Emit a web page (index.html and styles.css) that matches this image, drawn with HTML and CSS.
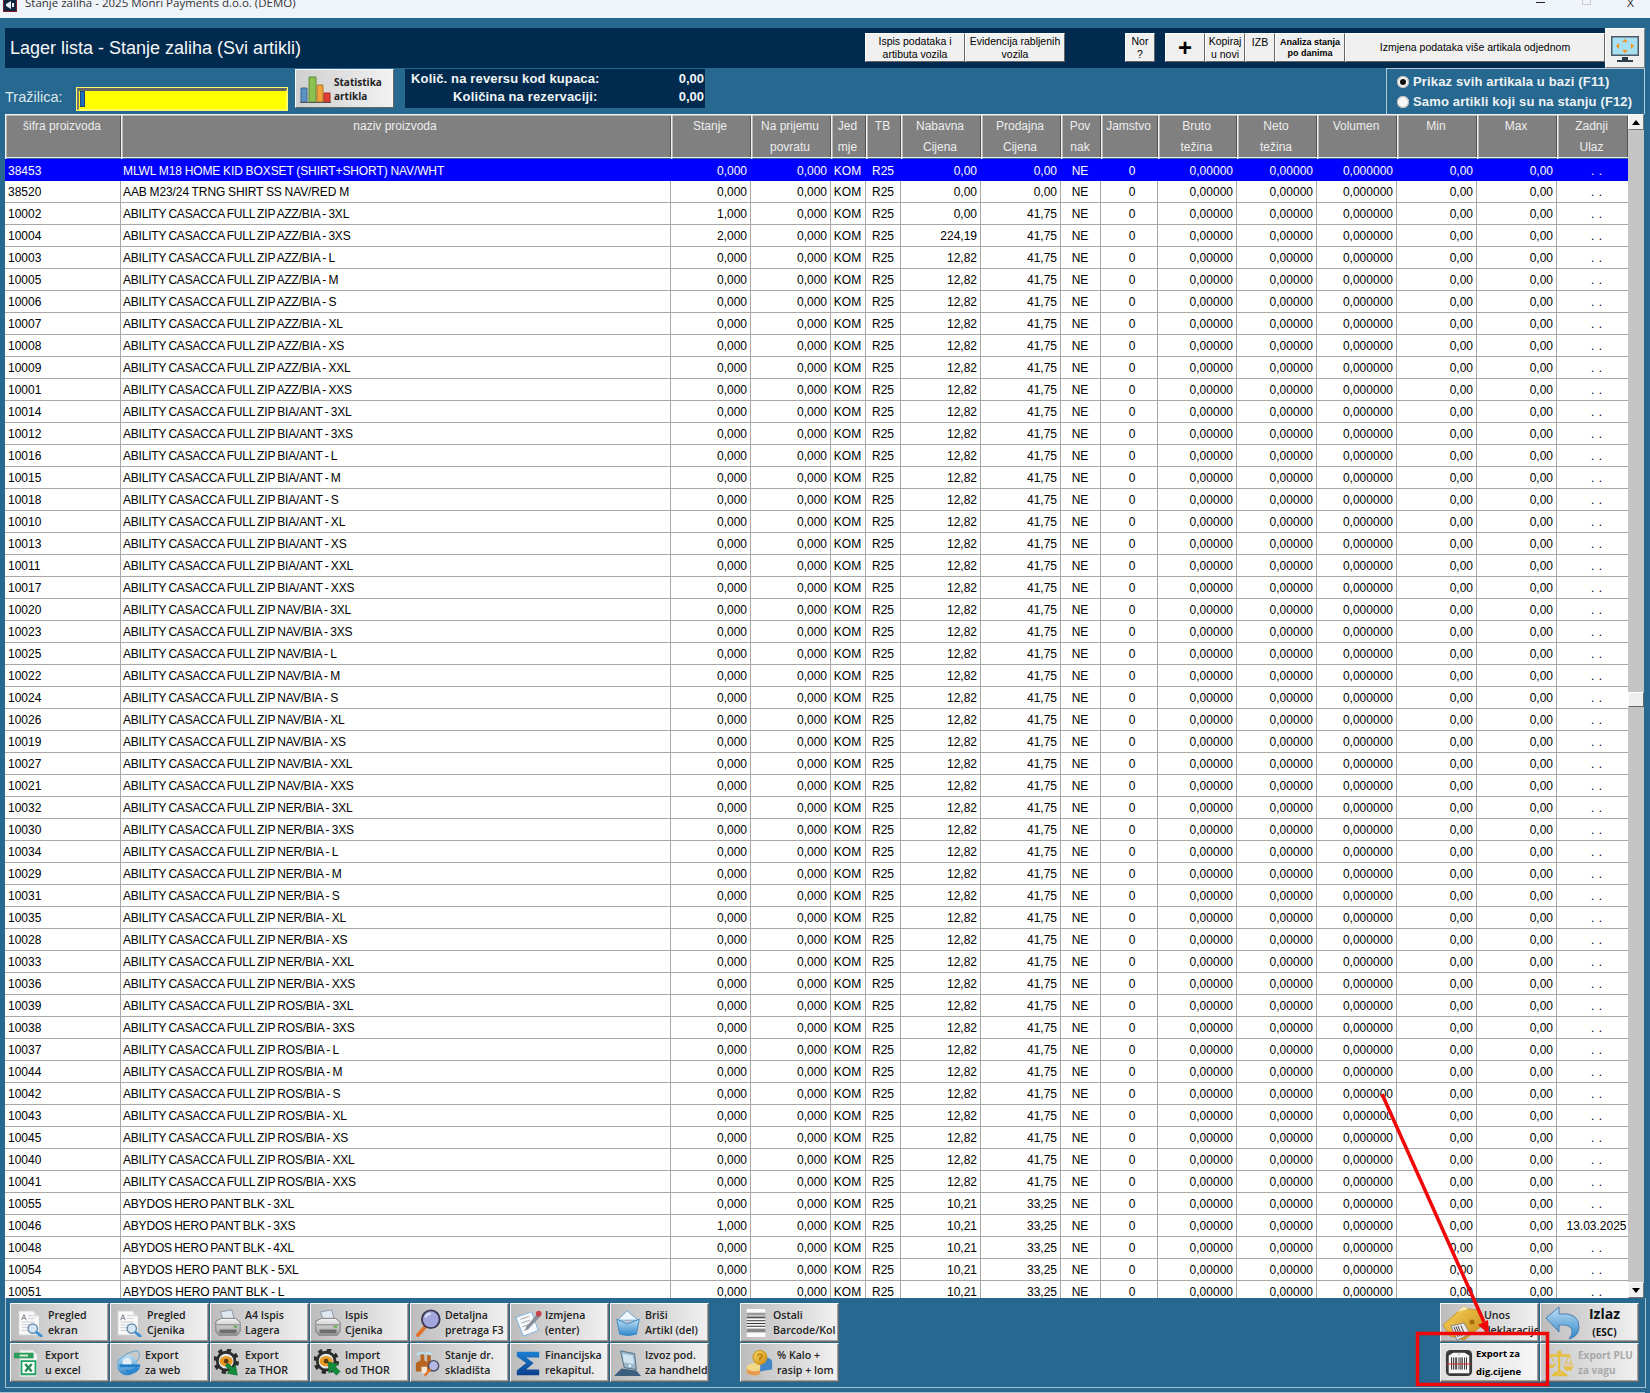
FILE: index.html
```html
<!DOCTYPE html>
<html lang="hr">
<head>
<meta charset="utf-8">
<title>Stanje zaliha</title>
<link rel="stylesheet" href="styles.css">
</head>
<body>
<svg class="defs" width="0" height="0" aria-hidden="true">
<defs>
<linearGradient id="gGrey" x1="0" y1="0" x2="0" y2="1"><stop offset="0" stop-color="#f4f4f4"/><stop offset="1" stop-color="#9a9a9a"/></linearGradient>
<linearGradient id="gBlue" x1="0" y1="0" x2="0" y2="1"><stop offset="0" stop-color="#bfe0f5"/><stop offset="1" stop-color="#2f86c8"/></linearGradient>
<linearGradient id="gGold" x1="0" y1="0" x2="1" y2="1"><stop offset="0" stop-color="#f7d560"/><stop offset="1" stop-color="#c88a14"/></linearGradient>
<linearGradient id="gSig" x1="0" y1="0" x2="0" y2="1"><stop offset="0" stop-color="#1c7fd0"/><stop offset="1" stop-color="#0b3f8c"/></linearGradient>
<symbol id="i-doc" viewBox="0 0 30 30">
<path d="M3 2h16l6 6v20H3z" fill="#fafafa" stroke="#c5c5c5"/><path d="M19 2v6h6z" fill="#dcdcdc"/>
<path d="M6 12l2.500-6 2.500 6M7 10h3" fill="none" stroke="#7a7a8a" stroke-width="1"/>
<path d="M13 7h5M13 10h7M6 14h14M6 17h10M6 20h8M6 23h8" stroke="#c4cad2" stroke-width="1"/>
<circle cx="18" cy="21" r="5" fill="#d4e7f6" stroke="#6f8ea8" stroke-width="1.600"/><path d="M22 25l5 4" stroke="#3f8fd0" stroke-width="3" stroke-linecap="round"/>
</symbol>
<symbol id="i-printer" viewBox="0 0 30 30">
<path d="M7 3l12-2 3 11H10z" fill="#dfe7ef" stroke="#8a97a5"/>
<path d="M2 13l6-3h15l5 4v10l-3 4H5l-3-4z" fill="url(#gGrey)" stroke="#777"/>
<path d="M3 17h24" stroke="#777"/><path d="M6 22h18v4H6z" fill="#6d6d6d"/><path d="M21 19h4" stroke="#5fb04a" stroke-width="2"/>
</symbol>
<symbol id="i-mag" viewBox="0 0 30 30">
<path d="M13 18L4 28" stroke="#e0722a" stroke-width="4" stroke-linecap="round"/>
<circle cx="18" cy="11" r="9.500" fill="#a3a7de" stroke="#3a3a52" stroke-width="2"/><path d="M12 9a7 7 0 0 1 6-4" stroke="#e6e8fa" stroke-width="2" fill="none"/>
</symbol>
<symbol id="i-edit" viewBox="0 0 30 30">
<path d="M2 9l17-6 7 20-16 6z" fill="#f6f9fc" stroke="#7cb1dc"/>
<path d="M7 11l9-3M8 15l9-3M9 19l9-3M11 23l5-2" stroke="#9a9a9a"/>
<path d="M13 19L25 5l3 3-12 13-4 2z" fill="#8a8e9a"/><circle cx="26.500" cy="5" r="3" fill="#c8404a"/>
</symbol>
<symbol id="i-trash" viewBox="0 0 30 30">
<path d="M4 12L14 2l12 10z" fill="#eef7fc" stroke="#6aa8d8"/>
<path d="M3 11l11 5 13-5-3 16q-9 3-18 0z" fill="url(#gBlue)" stroke="#3a86c4"/>
</symbol>
<symbol id="i-excel" viewBox="0 0 30 30">
<path d="M6 1h14l5 5v24H6z" fill="#f2f2f2" stroke="#cfcfcf"/>
<path d="M0 4h21v6H0z" fill="#2f9d5a"/><path d="M6 6h9v2H6z" fill="#d6f0de"/>
<path d="M8 13h15v14H8z" fill="#fff" stroke="#21a366" stroke-width="2"/><path d="M12 16l7 8M19 16l-7 8" stroke="#1a8a52" stroke-width="2.400"/>
</symbol>
<symbol id="i-ie" viewBox="0 0 30 30">
<circle cx="14" cy="17" r="11" fill="url(#gBlue)"/><circle cx="14" cy="14.500" r="5" fill="#e6eef5"/>
<path d="M6 16.500h22v3H6z" fill="#1f7cc8"/><path d="M12 22q8 1 11-3l5 1q-5 8-14 7z" fill="#2a88d0"/>
<path d="M3 14Q14 2 25 2q5 3-1 12" fill="none" stroke="#7aa9c8" stroke-width="1.200"/>
</symbol>
<symbol id="i-gearout" viewBox="0 0 30 30">
<circle cx="13" cy="13" r="9.500" fill="#e8e8e8" stroke="#2e2e2e" stroke-width="3"/><circle cx="13" cy="13" r="12" fill="none" stroke="#2a2a2a" stroke-width="3.500" stroke-dasharray="4.500 5"/>
<ellipse cx="13" cy="13" rx="7" ry="5.500" fill="#e89a24"/><circle cx="13" cy="13" r="2.500" fill="#5a3a10"/>
<path d="M15 15l5 5 3-3 2 11-11-2 3-3-5-5z" fill="#148a3c" stroke="#0c6a2c" stroke-width=".6"/>
</symbol>
<symbol id="i-gearin" viewBox="0 0 30 30">
<circle cx="13" cy="13" r="9.500" fill="#e8e8e8" stroke="#2e2e2e" stroke-width="3"/><circle cx="13" cy="13" r="12" fill="none" stroke="#2a2a2a" stroke-width="3.500" stroke-dasharray="4.500 5"/>
<ellipse cx="13" cy="13" rx="7" ry="5.500" fill="#e89a24"/><circle cx="13" cy="13" r="2.500" fill="#5a3a10"/>
<path d="M15 14l11 2-3 3 5 5-4 4-5-5-3 3z" fill="#148a3c" stroke="#0c6a2c" stroke-width=".6"/>
</symbol>
<symbol id="i-store" viewBox="0 0 30 30">
<path d="M2 15l5-3v-7h4v7l3 2v-8h4v10h1v8H2z" fill="#b8651f"/><path d="M8 19h6v7H8z" fill="#f2e7d5"/>
<path d="M2 6q4-5 9-2 5-2 9 1l-3 2q-3-2-6-1-4-1-7 1z" fill="#b9dff2"/>
<circle cx="21" cy="18" r="5.500" fill="#b4b8e2" stroke="#4a4a60" stroke-width="1.500"/><path d="M17 22l-5 6" stroke="#e0722a" stroke-width="2.500" stroke-linecap="round"/>
</symbol>
<symbol id="i-sigma" viewBox="0 0 30 30">
<path d="M3 3h24v6H13l8 6-8 7h14v6H3v-5l10-8L3 8z" fill="url(#gSig)"/>
</symbol>
<symbol id="i-pda" viewBox="0 0 30 30">
<path d="M7 2l15 3 2 17-13-2z" fill="#9ab7cc" stroke="#506a80"/><path d="M9 5l11 2 1.500 9-11-1.500z" fill="#cfe3ef"/>
<circle cx="17" cy="18" r="1.500" fill="#e8f4fa"/>
<path d="M8 21l16 2 5 6H0z" fill="#3b5f7d"/>
</symbol>
<symbol id="i-stripes" viewBox="0 0 30 30">
<path d="M4 0h20v30H4z" fill="#fafafa"/><path d="M4 4h20v3H4z" fill="#999"/><path d="M4 8h20v2H4z" fill="#555"/><path d="M4 12h20v1H4zM4 15h20v1H4zM4 18h20v1H4z" fill="#333"/><path d="M4 21h20v4H4z" fill="#888"/>
</symbol>
<symbol id="i-coin" viewBox="0 0 30 30">
<path d="M2 19a11 5 0 0 1 14-4v12q-8 3-14-1z" fill="#f2d98a"/><path d="M2 21a9 4 0 0 0 14 2v4q-8 3-14-1z" fill="#e89a50"/>
<path d="M17 10q9-3 12 3v9l-13 2z" fill="#3f86c8"/>
<circle cx="16" cy="9" r="7.500" fill="url(#gGold)" stroke="#c89010"/><path d="M13.500 7q2.500-3 5 0-.5 2-2.500 3v2" fill="none" stroke="#b87a00" stroke-width="1.500"/>
</symbol>
<symbol id="i-folder" viewBox="0 0 40 36">
<path d="M0 20L21 1l4 3 12 1 3 15-19 15-14-4z" fill="url(#gGold)" stroke="#b07a10" stroke-width=".6"/><path d="M25 4L14 7l7-6z" fill="#f6eab8"/>
<circle cx="29" cy="17" r="2.500" fill="#a86a10"/>
<path d="M8 21l13-3 6 11-13 6z" fill="#ececec" stroke="#888"/><path d="M11 22l4 10M13 21.500l4 10M15 21l4 10M18 20.500l4 10" stroke="#444"/>
</symbol>
<symbol id="i-undo" viewBox="0 0 36 36">
<path d="M1 13L14 2v7q20-2 20 13 0 9-10 12 4-5 3-9-2-6-13-5v7z" fill="url(#gBlue)" stroke="#4a7fb5"/>
</symbol>
<symbol id="i-scan" viewBox="0 0 30 30">
<rect x="1" y="1" width="28" height="28" rx="5" fill="#3a3a3a"/><path d="M4 7l5-3h12l5 3v19H4z" fill="#f6f6f6"/>
<path d="M6 9h18v12H6z" fill="#fff"/><path d="M7 9v13M9 9v13M11 9v13M12.500 9v13M15 9v13M17 9v13M18.500 9v13M21 9v13M23 9v13" stroke="#222" stroke-width="1"/>
<path d="M2 16h26" stroke="#e0252a" stroke-width="1"/><path d="M14.500 5h1v1h-1z" fill="#333"/>
</symbol>
<symbol id="i-scale" viewBox="0 0 30 30">
<path d="M14 3v22M8 28h13l-3-3h-7zM3 7h23" stroke="#e6bf3c" stroke-width="2.500" fill="none"/><circle cx="14.500" cy="4" r="2.500" fill="#e6bf3c"/>
<path d="M1 17h9l-2 3H3zM19 19h10l-2 4h-6z" fill="#e6bf3c"/><path d="M3 7l-2 10M5 7l5 10M24 8l-5 11M25 8l4 11" stroke="#e6bf3c"/><path d="M21 14h6v5h-6z" fill="#e0c8a0"/>
</symbol>
</defs>
</svg>

<header class="titlebar">
  <svg class="winicon" viewBox="0 0 14 14" width="14" height="14"><path d="M0 0h14v14H0z" fill="#7a1f2a"/><path d="M1 1h12v12H1z" fill="#10263f"/><path d="M3 6l5-3v8l-5-3zM9 5h2v4H9z" fill="#e8eef4"/></svg>
  <span class="wintitle">Stanje zaliha - 2025 Monri Payments d.o.o. (DEMO)</span>
  <span class="winctl">
    <span class="winmin"></span><span class="winmax"></span><span class="winclose">X</span>
  </span>
</header>

<div class="screen">
  <div class="topbar">
    <div class="heading">
      <h1 class="pagetitle">Lager lista - Stanje zaliha (Svi artikli)</h1>
      <button class="tool w100">Ispis podataka i<br>artibuta vozila</button>
      <button class="tool w100">Evidencija rabljenih<br>vozila</button>
      <button class="tool w30 gapl60">Nor<br>?</button>
      <button class="tool w40 gapl10 plus">+</button>
      <button class="tool w40">Kopiraj<br>u novi</button>
      <button class="tool w30 top">IZB</button>
      <button class="tool w70 strong">Analiza stanja<br>po danima</button>
      <button class="tool w260">Izmjena podataka više artikala odjednom</button>
    </div>
    <button class="monitor" aria-label="Monitor">
      <svg viewBox="0 0 28 27" width="28" height="27"><path d="M0 0h28v20H0z" fill="#4a5a68"/><path d="M1.500 1.500h25v17h-25z" fill="#a8dff2"/><path d="M11 21h6v3h-6zM6 24h16v2H6z" fill="#2e3e4c"/><path d="M14 3l3 3h-6zM14 17l-3-3h6zM5 10l3-3v6zM23 10l-3-3v6z" fill="#f2951f"/></svg>
    </button>
  </div>

  <div class="searchrow">
    <label class="searchlabel">Tražilica:</label>
    <div class="searchinput"><span class="caret"></span></div>
    <button class="statbtn">
      <svg viewBox="0 0 31 27" width="31" height="27"><path d="M1 12h6v14H1z" fill="#5b93c7" stroke="#3a668f"/><path d="M9 1h7v25H9z" fill="#8cc152" stroke="#5e8a30"/><path d="M17 9h6v17h-6z" fill="#f0a23c" stroke="#b5741e"/><path d="M24 17h6v9h-6z" fill="#e23e36" stroke="#a82820"/><path d="M0 26h31v1H0z" fill="#555"/></svg>
      <span>Statistika<br>artikla</span>
    </button>
    <div class="info">
      <div class="infolabels"><div>Količ. na reversu kod kupaca:</div><div class="indent">Količina na rezervaciji:</div></div>
      <div class="infovals"><div>0,00</div><div>0,00</div></div>
    </div>
    <div class="radios">
      <div class="radio"><span class="dot on"></span>Prikaz svih artikala u bazi (F11)</div>
      <div class="radio"><span class="dot"></span>Samo artikli koji su na stanju (F12)</div>
    </div>
  </div>

  <div class="gridwrap">
    <table class="grid">
      <colgroup><col class="c116"><col class="c550"><col class="c80"><col class="c80"><col class="c35"><col class="c35"><col class="c80"><col class="c80"><col class="c40"><col class="c57"><col class="c79"><col class="c80"><col class="c80"><col class="c80"><col class="c80"><col class="c71"></colgroup>
      <thead><tr><th>šifra proizvoda<th>naziv proizvoda<th>Stanje<th>Na prijemu<br>povratu<th>Jed<br>mje<th>TB<th>Nabavna<br>Cijena<th>Prodajna<br>Cijena<th>Pov<br>nak<th>Jamstvo<th>Bruto<br>težina<th>Neto<br>težina<th>Volumen<th>Min<th>Max<th>Zadnji<br>Ulaz</tr></thead>
      <tbody>
<tr class="sel"><td>38453<td>MLWL M18 HOME KID BOXSET (SHIRT+SHORT) NAV/WHT<td>0,000<td>0,000<td>KOM<td>R25<td>0,00<td>0,00<td>NE<td>0<td>0,00000<td>0,00000<td>0,000000<td>0,00<td>0,00<td>. .
<tr><td>38520<td>AAB M23/24 TRNG SHIRT SS NAV/RED M<td>0,000<td>0,000<td>KOM<td>R25<td>0,00<td>0,00<td>NE<td>0<td>0,00000<td>0,00000<td>0,000000<td>0,00<td>0,00<td>. .
<tr><td>10002<td>ABILITY CASACCA FULL ZIP AZZ/BIA - 3XL<td>1,000<td>0,000<td>KOM<td>R25<td>0,00<td>41,75<td>NE<td>0<td>0,00000<td>0,00000<td>0,000000<td>0,00<td>0,00<td>. .
<tr><td>10004<td>ABILITY CASACCA FULL ZIP AZZ/BIA - 3XS<td>2,000<td>0,000<td>KOM<td>R25<td>224,19<td>41,75<td>NE<td>0<td>0,00000<td>0,00000<td>0,000000<td>0,00<td>0,00<td>. .
<tr><td>10003<td>ABILITY CASACCA FULL ZIP AZZ/BIA - L<td>0,000<td>0,000<td>KOM<td>R25<td>12,82<td>41,75<td>NE<td>0<td>0,00000<td>0,00000<td>0,000000<td>0,00<td>0,00<td>. .
<tr><td>10005<td>ABILITY CASACCA FULL ZIP AZZ/BIA - M<td>0,000<td>0,000<td>KOM<td>R25<td>12,82<td>41,75<td>NE<td>0<td>0,00000<td>0,00000<td>0,000000<td>0,00<td>0,00<td>. .
<tr><td>10006<td>ABILITY CASACCA FULL ZIP AZZ/BIA - S<td>0,000<td>0,000<td>KOM<td>R25<td>12,82<td>41,75<td>NE<td>0<td>0,00000<td>0,00000<td>0,000000<td>0,00<td>0,00<td>. .
<tr><td>10007<td>ABILITY CASACCA FULL ZIP AZZ/BIA - XL<td>0,000<td>0,000<td>KOM<td>R25<td>12,82<td>41,75<td>NE<td>0<td>0,00000<td>0,00000<td>0,000000<td>0,00<td>0,00<td>. .
<tr><td>10008<td>ABILITY CASACCA FULL ZIP AZZ/BIA - XS<td>0,000<td>0,000<td>KOM<td>R25<td>12,82<td>41,75<td>NE<td>0<td>0,00000<td>0,00000<td>0,000000<td>0,00<td>0,00<td>. .
<tr><td>10009<td>ABILITY CASACCA FULL ZIP AZZ/BIA - XXL<td>0,000<td>0,000<td>KOM<td>R25<td>12,82<td>41,75<td>NE<td>0<td>0,00000<td>0,00000<td>0,000000<td>0,00<td>0,00<td>. .
<tr><td>10001<td>ABILITY CASACCA FULL ZIP AZZ/BIA - XXS<td>0,000<td>0,000<td>KOM<td>R25<td>12,82<td>41,75<td>NE<td>0<td>0,00000<td>0,00000<td>0,000000<td>0,00<td>0,00<td>. .
<tr><td>10014<td>ABILITY CASACCA FULL ZIP BIA/ANT - 3XL<td>0,000<td>0,000<td>KOM<td>R25<td>12,82<td>41,75<td>NE<td>0<td>0,00000<td>0,00000<td>0,000000<td>0,00<td>0,00<td>. .
<tr><td>10012<td>ABILITY CASACCA FULL ZIP BIA/ANT - 3XS<td>0,000<td>0,000<td>KOM<td>R25<td>12,82<td>41,75<td>NE<td>0<td>0,00000<td>0,00000<td>0,000000<td>0,00<td>0,00<td>. .
<tr><td>10016<td>ABILITY CASACCA FULL ZIP BIA/ANT - L<td>0,000<td>0,000<td>KOM<td>R25<td>12,82<td>41,75<td>NE<td>0<td>0,00000<td>0,00000<td>0,000000<td>0,00<td>0,00<td>. .
<tr><td>10015<td>ABILITY CASACCA FULL ZIP BIA/ANT - M<td>0,000<td>0,000<td>KOM<td>R25<td>12,82<td>41,75<td>NE<td>0<td>0,00000<td>0,00000<td>0,000000<td>0,00<td>0,00<td>. .
<tr><td>10018<td>ABILITY CASACCA FULL ZIP BIA/ANT - S<td>0,000<td>0,000<td>KOM<td>R25<td>12,82<td>41,75<td>NE<td>0<td>0,00000<td>0,00000<td>0,000000<td>0,00<td>0,00<td>. .
<tr><td>10010<td>ABILITY CASACCA FULL ZIP BIA/ANT - XL<td>0,000<td>0,000<td>KOM<td>R25<td>12,82<td>41,75<td>NE<td>0<td>0,00000<td>0,00000<td>0,000000<td>0,00<td>0,00<td>. .
<tr><td>10013<td>ABILITY CASACCA FULL ZIP BIA/ANT - XS<td>0,000<td>0,000<td>KOM<td>R25<td>12,82<td>41,75<td>NE<td>0<td>0,00000<td>0,00000<td>0,000000<td>0,00<td>0,00<td>. .
<tr><td>10011<td>ABILITY CASACCA FULL ZIP BIA/ANT - XXL<td>0,000<td>0,000<td>KOM<td>R25<td>12,82<td>41,75<td>NE<td>0<td>0,00000<td>0,00000<td>0,000000<td>0,00<td>0,00<td>. .
<tr><td>10017<td>ABILITY CASACCA FULL ZIP BIA/ANT - XXS<td>0,000<td>0,000<td>KOM<td>R25<td>12,82<td>41,75<td>NE<td>0<td>0,00000<td>0,00000<td>0,000000<td>0,00<td>0,00<td>. .
<tr><td>10020<td>ABILITY CASACCA FULL ZIP NAV/BIA - 3XL<td>0,000<td>0,000<td>KOM<td>R25<td>12,82<td>41,75<td>NE<td>0<td>0,00000<td>0,00000<td>0,000000<td>0,00<td>0,00<td>. .
<tr><td>10023<td>ABILITY CASACCA FULL ZIP NAV/BIA - 3XS<td>0,000<td>0,000<td>KOM<td>R25<td>12,82<td>41,75<td>NE<td>0<td>0,00000<td>0,00000<td>0,000000<td>0,00<td>0,00<td>. .
<tr><td>10025<td>ABILITY CASACCA FULL ZIP NAV/BIA - L<td>0,000<td>0,000<td>KOM<td>R25<td>12,82<td>41,75<td>NE<td>0<td>0,00000<td>0,00000<td>0,000000<td>0,00<td>0,00<td>. .
<tr><td>10022<td>ABILITY CASACCA FULL ZIP NAV/BIA - M<td>0,000<td>0,000<td>KOM<td>R25<td>12,82<td>41,75<td>NE<td>0<td>0,00000<td>0,00000<td>0,000000<td>0,00<td>0,00<td>. .
<tr><td>10024<td>ABILITY CASACCA FULL ZIP NAV/BIA - S<td>0,000<td>0,000<td>KOM<td>R25<td>12,82<td>41,75<td>NE<td>0<td>0,00000<td>0,00000<td>0,000000<td>0,00<td>0,00<td>. .
<tr><td>10026<td>ABILITY CASACCA FULL ZIP NAV/BIA - XL<td>0,000<td>0,000<td>KOM<td>R25<td>12,82<td>41,75<td>NE<td>0<td>0,00000<td>0,00000<td>0,000000<td>0,00<td>0,00<td>. .
<tr><td>10019<td>ABILITY CASACCA FULL ZIP NAV/BIA - XS<td>0,000<td>0,000<td>KOM<td>R25<td>12,82<td>41,75<td>NE<td>0<td>0,00000<td>0,00000<td>0,000000<td>0,00<td>0,00<td>. .
<tr><td>10027<td>ABILITY CASACCA FULL ZIP NAV/BIA - XXL<td>0,000<td>0,000<td>KOM<td>R25<td>12,82<td>41,75<td>NE<td>0<td>0,00000<td>0,00000<td>0,000000<td>0,00<td>0,00<td>. .
<tr><td>10021<td>ABILITY CASACCA FULL ZIP NAV/BIA - XXS<td>0,000<td>0,000<td>KOM<td>R25<td>12,82<td>41,75<td>NE<td>0<td>0,00000<td>0,00000<td>0,000000<td>0,00<td>0,00<td>. .
<tr><td>10032<td>ABILITY CASACCA FULL ZIP NER/BIA - 3XL<td>0,000<td>0,000<td>KOM<td>R25<td>12,82<td>41,75<td>NE<td>0<td>0,00000<td>0,00000<td>0,000000<td>0,00<td>0,00<td>. .
<tr><td>10030<td>ABILITY CASACCA FULL ZIP NER/BIA - 3XS<td>0,000<td>0,000<td>KOM<td>R25<td>12,82<td>41,75<td>NE<td>0<td>0,00000<td>0,00000<td>0,000000<td>0,00<td>0,00<td>. .
<tr><td>10034<td>ABILITY CASACCA FULL ZIP NER/BIA - L<td>0,000<td>0,000<td>KOM<td>R25<td>12,82<td>41,75<td>NE<td>0<td>0,00000<td>0,00000<td>0,000000<td>0,00<td>0,00<td>. .
<tr><td>10029<td>ABILITY CASACCA FULL ZIP NER/BIA - M<td>0,000<td>0,000<td>KOM<td>R25<td>12,82<td>41,75<td>NE<td>0<td>0,00000<td>0,00000<td>0,000000<td>0,00<td>0,00<td>. .
<tr><td>10031<td>ABILITY CASACCA FULL ZIP NER/BIA - S<td>0,000<td>0,000<td>KOM<td>R25<td>12,82<td>41,75<td>NE<td>0<td>0,00000<td>0,00000<td>0,000000<td>0,00<td>0,00<td>. .
<tr><td>10035<td>ABILITY CASACCA FULL ZIP NER/BIA - XL<td>0,000<td>0,000<td>KOM<td>R25<td>12,82<td>41,75<td>NE<td>0<td>0,00000<td>0,00000<td>0,000000<td>0,00<td>0,00<td>. .
<tr><td>10028<td>ABILITY CASACCA FULL ZIP NER/BIA - XS<td>0,000<td>0,000<td>KOM<td>R25<td>12,82<td>41,75<td>NE<td>0<td>0,00000<td>0,00000<td>0,000000<td>0,00<td>0,00<td>. .
<tr><td>10033<td>ABILITY CASACCA FULL ZIP NER/BIA - XXL<td>0,000<td>0,000<td>KOM<td>R25<td>12,82<td>41,75<td>NE<td>0<td>0,00000<td>0,00000<td>0,000000<td>0,00<td>0,00<td>. .
<tr><td>10036<td>ABILITY CASACCA FULL ZIP NER/BIA - XXS<td>0,000<td>0,000<td>KOM<td>R25<td>12,82<td>41,75<td>NE<td>0<td>0,00000<td>0,00000<td>0,000000<td>0,00<td>0,00<td>. .
<tr><td>10039<td>ABILITY CASACCA FULL ZIP ROS/BIA - 3XL<td>0,000<td>0,000<td>KOM<td>R25<td>12,82<td>41,75<td>NE<td>0<td>0,00000<td>0,00000<td>0,000000<td>0,00<td>0,00<td>. .
<tr><td>10038<td>ABILITY CASACCA FULL ZIP ROS/BIA - 3XS<td>0,000<td>0,000<td>KOM<td>R25<td>12,82<td>41,75<td>NE<td>0<td>0,00000<td>0,00000<td>0,000000<td>0,00<td>0,00<td>. .
<tr><td>10037<td>ABILITY CASACCA FULL ZIP ROS/BIA - L<td>0,000<td>0,000<td>KOM<td>R25<td>12,82<td>41,75<td>NE<td>0<td>0,00000<td>0,00000<td>0,000000<td>0,00<td>0,00<td>. .
<tr><td>10044<td>ABILITY CASACCA FULL ZIP ROS/BIA - M<td>0,000<td>0,000<td>KOM<td>R25<td>12,82<td>41,75<td>NE<td>0<td>0,00000<td>0,00000<td>0,000000<td>0,00<td>0,00<td>. .
<tr><td>10042<td>ABILITY CASACCA FULL ZIP ROS/BIA - S<td>0,000<td>0,000<td>KOM<td>R25<td>12,82<td>41,75<td>NE<td>0<td>0,00000<td>0,00000<td>0,000000<td>0,00<td>0,00<td>. .
<tr><td>10043<td>ABILITY CASACCA FULL ZIP ROS/BIA - XL<td>0,000<td>0,000<td>KOM<td>R25<td>12,82<td>41,75<td>NE<td>0<td>0,00000<td>0,00000<td>0,000000<td>0,00<td>0,00<td>. .
<tr><td>10045<td>ABILITY CASACCA FULL ZIP ROS/BIA - XS<td>0,000<td>0,000<td>KOM<td>R25<td>12,82<td>41,75<td>NE<td>0<td>0,00000<td>0,00000<td>0,000000<td>0,00<td>0,00<td>. .
<tr><td>10040<td>ABILITY CASACCA FULL ZIP ROS/BIA - XXL<td>0,000<td>0,000<td>KOM<td>R25<td>12,82<td>41,75<td>NE<td>0<td>0,00000<td>0,00000<td>0,000000<td>0,00<td>0,00<td>. .
<tr><td>10041<td>ABILITY CASACCA FULL ZIP ROS/BIA - XXS<td>0,000<td>0,000<td>KOM<td>R25<td>12,82<td>41,75<td>NE<td>0<td>0,00000<td>0,00000<td>0,000000<td>0,00<td>0,00<td>. .
<tr><td>10055<td>ABYDOS HERO PANT BLK - 3XL<td>0,000<td>0,000<td>KOM<td>R25<td>10,21<td>33,25<td>NE<td>0<td>0,00000<td>0,00000<td>0,000000<td>0,00<td>0,00<td>. .
<tr><td>10046<td>ABYDOS HERO PANT BLK - 3XS<td>1,000<td>0,000<td>KOM<td>R25<td>10,21<td>33,25<td>NE<td>0<td>0,00000<td>0,00000<td>0,000000<td>0,00<td>0,00<td>13.03.2025
<tr><td>10048<td>ABYDOS HERO PANT BLK - 4XL<td>0,000<td>0,000<td>KOM<td>R25<td>10,21<td>33,25<td>NE<td>0<td>0,00000<td>0,00000<td>0,000000<td>0,00<td>0,00<td>. .
<tr><td>10054<td>ABYDOS HERO PANT BLK - 5XL<td>0,000<td>0,000<td>KOM<td>R25<td>10,21<td>33,25<td>NE<td>0<td>0,00000<td>0,00000<td>0,000000<td>0,00<td>0,00<td>. .
<tr><td>10051<td>ABYDOS HERO PANT BLK - L<td>0,000<td>0,000<td>KOM<td>R25<td>10,21<td>33,25<td>NE<td>0<td>0,00000<td>0,00000<td>0,000000<td>0,00<td>0,00<td>. .
      </tbody>
    </table>
    <div class="scrollbar">
      <div class="sbtn"><span class="up"></span></div>
      <div class="track t1"></div>
      <div class="thumb"></div>
      <div class="track t2"></div>
      <div class="sbtn"><span class="down"></span></div>
    </div>
  </div>

  <footer class="panel">
    <div class="btns main">
      <button class="btn"><span class="ic i38"><svg><use href="#i-doc"/></svg></span><span>Pregled<br>ekran</span></button>
      <button class="btn"><span class="ic i37"><svg><use href="#i-doc"/></svg></span><span>Pregled<br>Cjenika</span></button>
      <button class="btn"><span class="ic"><svg><use href="#i-printer"/></svg></span><span>A4 Ispis<br>Lagera</span></button>
      <button class="btn"><span class="ic"><svg><use href="#i-printer"/></svg></span><span>Ispis<br>Cjenika</span></button>
      <button class="btn"><span class="ic"><svg><use href="#i-mag"/></svg></span><span>Detaljna<br>pretraga F3</span></button>
      <button class="btn"><span class="ic"><svg><use href="#i-edit"/></svg></span><span>Izmjena<br>(enter)</span></button>
      <button class="btn"><span class="ic"><svg><use href="#i-trash"/></svg></span><span>Briši<br>Artikl (del)</span></button>
      <button class="btn"><span class="ic"><svg><use href="#i-excel"/></svg></span><span>Export<br>u excel</span></button>
      <button class="btn"><span class="ic"><svg><use href="#i-ie"/></svg></span><span>Export<br>za web</span></button>
      <button class="btn"><span class="ic"><svg><use href="#i-gearout"/></svg></span><span>Export<br>za THOR</span></button>
      <button class="btn"><span class="ic"><svg><use href="#i-gearin"/></svg></span><span>Import<br>od THOR</span></button>
      <button class="btn"><span class="ic"><svg><use href="#i-store"/></svg></span><span>Stanje dr.<br>skladišta</span></button>
      <button class="btn"><span class="ic"><svg><use href="#i-sigma"/></svg></span><span>Financijska<br>rekapitul.</span></button>
      <button class="btn"><span class="ic"><svg><use href="#i-pda"/></svg></span><span>Izvoz pod.<br>za handheld</span></button>
    </div>
    <div class="btns single">
      <button class="btn"><span class="ic i33"><svg><use href="#i-stripes"/></svg></span><span>Ostali<br>Barcode/Kol</span></button>
      <button class="btn"><span class="ic i37"><svg><use href="#i-coin"/></svg></span><span>% Kalo +<br>rasip + lom</span></button>
    </div>
    <div class="btns double">
      <button class="btn"><span class="ic i44"><svg class="big"><use href="#i-folder"/></svg></span><span>Unos<br>deklaracije</span></button>
      <button class="btn exit"><span class="ic i44"><svg class="big"><use href="#i-undo"/></svg></span><span class="exittxt"><b>Izlaz</b><br>(ESC)</span></button>
      <button class="btn dig"><span class="ic i36"><svg><use href="#i-scan"/></svg></span><span>Export za<br>dig.cijene</span></button>
      <button class="btn off"><span class="ic i38"><svg><use href="#i-scale"/></svg></span><span>Export PLU<br>za vagu</span></button>
    </div>
  </footer>
  <div class="baseline"></div>
</div>

<svg class="callout" viewBox="0 0 1650 1393" width="1650" height="1393" aria-hidden="true">
  <path d="M1382 1094L1484 1322" stroke="#f00808" stroke-width="3.500" fill="none"/>
  <path d="M1489 1334l-11-9 10-5z" fill="#f00808"/>
  <rect x="1417.500" y="1333.500" width="130" height="51" fill="none" stroke="#f00808" stroke-width="3.500"/>
</svg>
</body>
</html>
```

FILE: styles.css
```css
* { box-sizing: border-box; }
html, body { margin: 0; padding: 0; }
body {
  width: 1650px;
  height: 1393px;
  overflow: hidden;
  background: #26688f;
  font-family: "Liberation Sans", Arial, sans-serif;
  font-size: 12px;
  position: relative;
}
button { font: inherit; margin: 0; padding: 0; cursor: default; color: #000; }
.defs { position: absolute; }

.titlebar {
  height: 18px;
  background: #eff3fa;
  display: flex;
  align-items: flex-start;
  overflow: hidden;
  color: #222;
  position: relative;
}
.winicon { margin: -2px 0 0 3px; flex: none; }
.wintitle {
  margin-left: 8px;
  font-family: "Open Sans", sans-serif;
  font-size: 11.500px;
  line-height: 6px;
  height: 6px;
  color: #333;
}
.winctl { margin-left: auto; display: flex; align-items: flex-start; }
.winmin { width: 9px; height: 1px; background: #222; margin: 2px 37px 0 0; }
.winmax { width: 9px; height: 5px; border: 1px solid #ccc; border-top: 0; margin-right: 36px; }
.winclose { font-size: 11px; line-height: 6px; margin-right: 16px; color: #333; }

.screen { padding: 10px 0 0 5px; }

.topbar { display: flex; width: 1640px; height: 40px; }
.heading {
  width: 1600px;
  background: #012b4e;
  display: flex;
  align-items: flex-start;
  padding-top: 5px;
}
.pagetitle {
  margin: 0 auto 0 5px;
  font-size: 18px;
  font-weight: normal;
  color: #f4f7f9;
  line-height: 30px;
}
.tool {
  height: 29px;
  background: #f0f0f0;
  border: 1px solid;
  border-color: #fff #666 #666 #fff;
  font-size: 10.500px;
  line-height: 13px;
  text-align: center;
  white-space: nowrap;
  overflow: hidden;
  flex: none;
}
.w30 { width: 30px; }
.w40 { width: 40px; }
.w70 { width: 70px; }
.w100 { width: 100px; }
.w260 { width: 260px; }
.gapl60 { margin-left: 60px; }
.gapl10 { margin-left: 10px; }
.plus { font-size: 24px; font-weight: bold; line-height: 24px; }
.top { padding-bottom: 10px; }
.strong { font-weight: bold; font-size: 9px; line-height: 11px; }
.monitor {
  width: 40px;
  height: 40px;
  background: #efefef;
  border: 1px solid;
  border-color: #fff #888 #888 #fff;
  display: flex;
  align-items: center;
  justify-content: center;
  padding-top: 2px;
}

.searchrow { display: flex; height: 46px; align-items: flex-start; }
.searchlabel {
  width: 71px;
  margin-top: 19px;
  line-height: 20px;
  font-size: 14.500px;
  color: #dde6ec;
}
.searchinput {
  width: 212px;
  height: 24px;
  margin-top: 19px;
  background: #ffff00;
  border: 2px solid #ffff66;
  border-top: 4px solid #666;
  border-left: 3px solid #777;
  outline: 1px solid #ffff66;
  outline-offset: -1px;
  padding-left: 1px;
  display: flex;
}
.caret { width: 5px; height: 16px; background: #1d6ec0; border: 1px solid #1a4a7a; }
.statbtn {
  width: 99px;
  height: 39px;
  margin: 1px 0 0 7px;
  background: linear-gradient(90deg, #cfcfcf, #f2f2f2);
  border: 1px solid;
  border-color: #f8f8f8 #666 #666 #f8f8f8;
  display: flex;
  align-items: center;
  gap: 3px;
  padding: 1px 0 0 4px;
  font-family: "Open Sans", sans-serif;
  font-weight: 700;
  font-size: 10px;
  line-height: 14px;
  text-align: left;
  color: #222;
}
.info {
  width: 300px;
  height: 39px;
  margin: 1px 0 0 11px;
  background: #012b4e;
  color: #f2f5f7;
  font-weight: bold;
  font-size: 13px;
  line-height: 18px;
  letter-spacing: 0.15px;
  display: flex;
  justify-content: space-between;
  padding: 1px 1px 0 6px;
}
.indent { padding-left: 42px; }
.infovals { text-align: right; font-weight: bold; letter-spacing: 0; }
.radios {
  margin-left: auto;
  margin-right: 5px;
  width: 259px;
  height: 46px;
  border: 1px solid #b4c9d6;
  border-bottom: 0;
  padding: 3px 0 0 10px;
  color: #eef3f6;
  font-weight: bold;
  font-size: 13px;
  line-height: 20px;
  letter-spacing: 0.15px;
}
.radio { display: flex; align-items: center; white-space: nowrap; gap: 4px; }
.dot { width: 12px; height: 12px; border-radius: 50%; background: #f6f6f6; flex: none; display: flex; align-items: center; justify-content: center; box-shadow: inset 0 0 0 1px #bbb; }
.dot.on::after { content: ""; width: 6px; height: 6px; border-radius: 50%; background: #111; }

.gridwrap { display: flex; width: 1639px; height: 1184px; overflow: hidden; }
.grid {
  width: 1623px;
  table-layout: fixed;
  border-collapse: separate;
  border-spacing: 0;
  flex: none;
  align-self: flex-start;
  background: #fff;
}
.c35 { width: 35px; } .c40 { width: 40px; } .c57 { width: 57px; } .c71 { width: 71px; }
.c79 { width: 79px; } .c80 { width: 80px; } .c116 { width: 116px; } .c550 { width: 550px; }
.grid th {
  height: 45px;
  padding: 2px 2px 0 0;
  vertical-align: top;
  font-weight: normal;
  color: #ededed;
  line-height: 21px;
  background: #808080;
  border: 0;
  white-space: nowrap;
  box-shadow: inset 1.500px 1.500px 0 #f2f2f2, inset 0 -1px 0 #26688f, inset 0 -2px 0 #f2f2f2, inset -1px 0 0 #555;
}
.grid td {
  height: 22px;
  padding: 1px 3px 0;
  line-height: 20px;
  white-space: nowrap;
  overflow: hidden;
  background: #fff;
  color: #000;
  text-align: right;
  border-right: 1px solid #a8a8a8;
  border-bottom: 1px solid #a8a8a8;
}
.grid td:nth-child(1), .grid td:nth-child(2) { text-align: left; }
.grid td:nth-child(2) { padding-left: 2px; letter-spacing: -0.1px; word-spacing: -0.4px; }
.grid tbody tr:nth-child(n+3):nth-child(-n+50) td:nth-child(2) { letter-spacing: -0.2px; word-spacing: -0.8px; }
.grid td:nth-child(5), .grid td:nth-child(9) { text-align: center; padding-left: 0; padding-right: 1px; }
.grid td:nth-child(6) { text-align: center; padding-left: 0; padding-right: 0; }
.grid td:nth-child(10) { text-align: center; padding-left: 6px; padding-right: 0; }
.grid td:nth-child(16) { text-align: center; padding-left: 8px; padding-right: 0; word-spacing: 1px; }
.grid td:last-child { border-right: 0; }
.grid .sel td { background: #0000ff; color: #fff; border-color: #0000ff; padding-top: 4px; line-height: 17px; }

.scrollbar { width: 16px; display: flex; flex-direction: column; flex: none; background: #c4c4c4; }
.sbtn {
  height: 16px;
  background: #f0f0f0;
  border: 1px solid;
  border-color: #fff #777 #777 #fff;
  display: flex;
  align-items: center;
  justify-content: center;
}
.up, .down { width: 0; height: 0; border-left: 4px solid transparent; border-right: 4px solid transparent; }
.up { border-bottom: 5px solid #000; }
.down { border-top: 5px solid #000; }
.track { background: #c4c4c4; }
.t1 { flex: 562; }
.t2 { flex: 575; }
.thumb {
  height: 15px;
  background: #eeeeee;
  border: 1px solid;
  border-color: #fff #666 #666 #fff;
}

.panel {
  width: 1641px;
  height: 90px;
  border: 1px solid #a9c1cf;
  border-top: 0;
  padding: 5px 0 0 4px;
  display: flex;
}
.btns { display: grid; grid-auto-rows: 39px; row-gap: 1px; column-gap: 1px; align-content: start; }
.main { grid-template-columns: repeat(7, 99px); }
.single { grid-template-columns: 99px; margin-left: 31px; }
.double { grid-template-columns: repeat(2, 99px); margin-left: 601px; }
.btn {
  display: flex;
  align-items: center;
  background: linear-gradient(90deg, #bcbcbc, #f1f1f1);
  border: 1px solid;
  border-color: #f6f6f6 #6a6a6a #6a6a6a #f6f6f6;
  box-shadow: inset -1px -1px 0 #a0a0a0;
  font-family: "Open Sans", sans-serif;
  font-weight: 600;
  font-size: 10.600px;
  line-height: 15px;
  color: #222;
  text-align: left;
  white-space: nowrap;
  overflow: hidden;
}
.ic { width: 34px; flex: none; display: flex; align-items: center; justify-content: center; }
.ic svg { width: 28px; height: 28px; display: block; }
.ic svg.big { width: 40px; height: 36px; flex: none; }
.i33 { width: 32px; } .i36 { width: 35px; } .i37 { width: 36px; } .i38 { width: 37px; } .i44 { width: 43px; }
.exit { color: #111; }
.exittxt { text-align: center; font-size: 10px; font-weight: 700; line-height: 17px; flex: 1; padding-right: 5px; margin-left: -8px; }
.exittxt b { font-size: 14px; font-weight: 700; }
.dig { font-size: 9.500px; font-weight: 700; line-height: 18px; color: #000; background: linear-gradient(90deg, #dedede, #f6f6f6); }
.off { color: #a8a8a8; font-weight: 700; background: linear-gradient(90deg, #c8c8c8, #f0f0f0); font-size: 10px; }

.baseline { width: 1645px; margin: 4px 0 0 -5px; height: 1px; background: #a9c1cf; }

.callout { position: absolute; left: 0; top: 0; pointer-events: none; }
```
